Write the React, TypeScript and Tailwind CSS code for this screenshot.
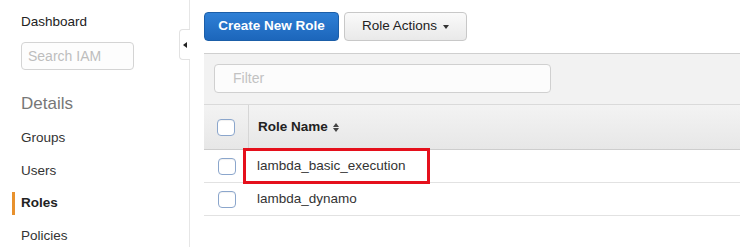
const navItems = ['Groups', 'Users', 'Roles', 'Policies']
const roles = ['lambda_basic_execution', 'lambda_dynamo']

const Checkbox = () => (
  <div className="w-[18px] h-[17px] rounded-[4px] border border-[#8ba6cc] bg-white shadow-[inset_0_1px_1px_rgba(0,0,0,0.06)]" />
)

const Sidebar = () => (
  <aside className="relative w-[190px] shrink-0 h-full border-r border-[#e6e6e6]">
    <div className="pl-[21px] pt-[14px] text-[13.5px] leading-[16px] text-[#222]">Dashboard</div>
    <div className="ml-[21px] mt-[12px] w-[113px] h-[28px] rounded-[4px] border border-[#d4d4d4] bg-[#fdfdfd] px-[6px] flex items-center text-[14px] text-[#bdbdbd]">
      Search IAM
    </div>
    <div className="pl-[21px] mt-[24px] text-[17px] leading-[20px] text-[#777]">Details</div>
    <ul className="mt-[8px]">
      {navItems.map((item) => (
        <li
          key={item}
          className={`relative h-[32.5px] pl-[21px] flex items-center text-[13.5px] ${
            item === 'Roles' ? 'font-bold text-[#222]' : 'text-[#333]'
          }`}
        >
          {item === 'Roles' && <span className="absolute left-[12px] top-[5px] w-[3px] h-[23px] bg-[#e8912d]" />}
          {item}
        </li>
      ))}
    </ul>

    {/* collapse tab */}
    <div className="absolute left-[179px] top-[29px] w-[11px] h-[31px] rounded-l-[4px] border border-r-0 border-[#e2e2e2] bg-white flex items-center justify-center">
      <span className="w-0 h-0 border-y-[3px] border-y-transparent border-r-[4px] border-r-[#222]" />
    </div>
  </aside>
)

const App = () => {
  return (
    <div className="w-[740px] h-[247px] overflow-hidden bg-white flex font-['Liberation_Sans',Arial,sans-serif]">
      <Sidebar />

      <main className="flex-1 pl-[14px] min-w-0">
        <div className="flex pt-[12px] gap-[5px]">
          <button className="w-[135px] h-[29px] rounded-[4px] border border-[#1b5ea8] bg-gradient-to-b from-[#2f80d6] to-[#1c66bb] text-white text-[13.5px] font-bold">
            Create New Role
          </button>
          <button className="w-[123px] h-[29px] rounded-[4px] border border-[#c8c8c8] bg-gradient-to-b from-[#fafafa] to-[#e9e9e9] text-[#222] text-[13.5px] flex items-center justify-center gap-[6px]">
            Role Actions
            <span className="w-0 h-0 border-x-[3.5px] border-x-transparent border-t-[4px] border-t-[#333]" />
          </button>
        </div>

        <div className="mt-[12px] h-[51px] border-t border-[#cfcfcf] bg-[#f2f2f2] pl-[10px] pt-[10px]">
          <div className="w-[337px] h-[29px] rounded-[4px] border border-[#d0d0d0] bg-[#fcfcfc] pl-[18px] flex items-center text-[14px] text-[#c2c2c2]">
            Filter
          </div>
        </div>

        <div className="relative">
          <div className="flex h-[46px] border-t border-[#dadada] border-b border-b-[#cdcdcd] bg-gradient-to-b from-[#f3f3f3] to-[#e7e7e7]">
            <div className="w-[45px] border-r border-[#d6d6d6] flex items-center justify-center">
              <Checkbox />
            </div>
            <div className="flex items-center pl-[9px] text-[13.5px] font-bold text-[#222] gap-[5px]">
              Role Name
              <span className="flex flex-col gap-[1px]">
                <span className="w-0 h-0 border-x-[3.5px] border-x-transparent border-b-[4px] border-b-[#444]" />
                <span className="w-0 h-0 border-x-[3.5px] border-x-transparent border-t-[4px] border-t-[#444]" />
              </span>
            </div>
          </div>

          {roles.map((role) => (
            <div key={role} className="flex h-[33px] border-b border-[#e2e2e2]">
              <div className="w-[45px] flex items-center justify-center">
                <Checkbox />
              </div>
              <div className="flex items-center pl-[8px] pt-[1px] text-[13.5px] text-[#333]">{role}</div>
            </div>
          ))}

          {/* highlight */}
          <div className="absolute left-[39px] top-[44px] w-[187px] h-[36px] border-[3px] border-[#e5101c]" />
        </div>
      </main>
    </div>
  )
}

export default App
